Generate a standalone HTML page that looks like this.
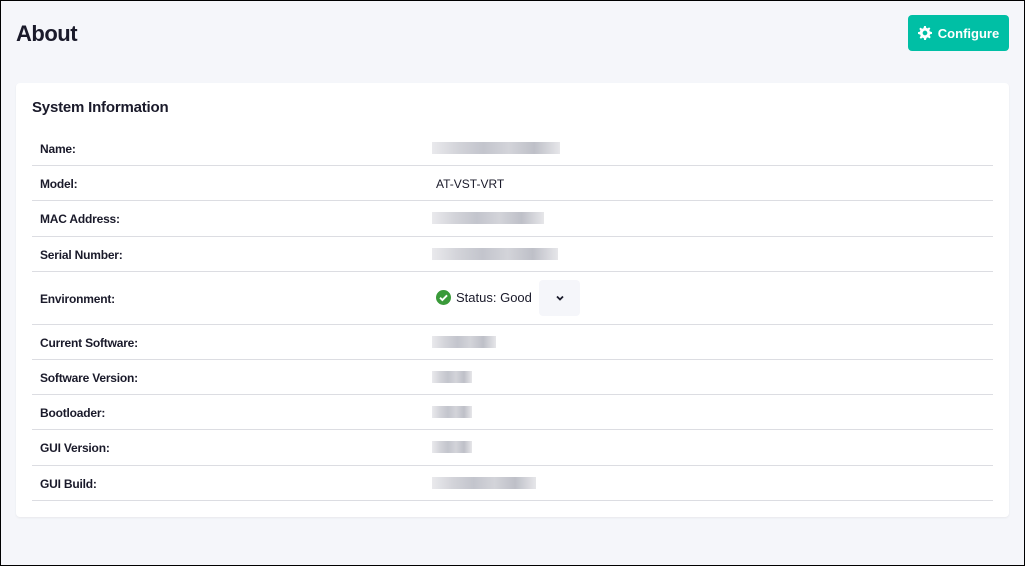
<!DOCTYPE html>
<html><head><style>
*{box-sizing:border-box;margin:0;padding:0}
body{width:1025px;height:566px;background:#f5f6fa;font-family:"Liberation Sans",sans-serif;position:relative;overflow:hidden}
.frame{position:fixed;left:0;top:0;width:1025px;height:566px;border:1px solid #000;pointer-events:none}
h1{position:absolute;left:16px;top:21px;font-size:22px;font-weight:bold;color:#1a1a2a;letter-spacing:-0.5px}
.btn{position:absolute;left:908px;top:15px;width:101px;height:36px;background:#00bfa5;border-radius:4px;color:#fff;font-size:13px;font-weight:bold;display:flex;align-items:center;justify-content:center;gap:6px}
.card{position:absolute;left:16px;top:83px;width:993px;height:434px;background:#fff;border-radius:4px;box-shadow:0 1px 2px rgba(0,0,0,.06)}
.card h2{position:absolute;left:16px;top:16px;font-size:15px;font-weight:bold;color:#1a1a2a;letter-spacing:-0.2px}
.row{position:absolute;left:16px;width:961px;border-bottom:1px solid #dcdde2;font-size:12px;color:#1a1a2a}
.row .l{position:absolute;left:8px;font-weight:bold;letter-spacing:-0.2px}
.row .v{position:absolute;left:400px}
.blur{height:12px;background:linear-gradient(90deg,#e4e4e8,#c8c9d0 20%,#b4b6c0 40%,#c8c9d0 60%,#aeb0ba 80%,#e0e0e4);opacity:.8}
</style></head><body>
<h1>About</h1>
<div class="btn"><svg width="14" height="14" viewBox="0 0 16 16"><path fill="#fff" d="M7 0h2l.4 2.1 1.5.6 1.8-1.2 1.4 1.4-1.2 1.8.6 1.5L16 7v2l-2.1.4-.6 1.5 1.2 1.8-1.4 1.4-1.8-1.2-1.5.6L9 16H7l-.4-2.1-1.5-.6-1.8 1.2-1.4-1.4 1.2-1.8-.6-1.5L0 9V7l2.1-.4.6-1.5-1.2-1.8 1.4-1.4 1.8 1.2 1.5-.6zM8 5.3A2.7 2.7 0 1 0 8 10.7 2.7 2.7 0 1 0 8 5.3z"/></svg>Configure</div>
<div class="card">
<h2>System Information</h2>
<div class="row" style="top:48px;height:35px"><span class="l" style="top:11px">Name:</span><div class="v blur" style="top:11px;width:128px"></div></div>
<div class="row" style="top:83px;height:35px"><span class="l" style="top:11px">Model:</span><span class="v" style="top:11px;left:404px">AT-VST-VRT</span></div>
<div class="row" style="top:118px;height:36px"><span class="l" style="top:11px">MAC Address:</span><div class="v blur" style="top:11px;width:112px"></div></div>
<div class="row" style="top:154px;height:35px"><span class="l" style="top:11px">Serial Number:</span><div class="v blur" style="top:11px;width:126px"></div></div>
<div class="row" style="top:189px;height:53px"><span class="l" style="top:20px">Environment:</span>
<span class="v" style="top:18px;left:404px;display:flex;align-items:center;gap:5px"><svg width="15" height="15" viewBox="0 0 16 16"><circle cx="8" cy="8" r="8" fill="#3a9a3a"/><path d="M4.3 8.2l2.5 2.5 5-5" stroke="#fff" stroke-width="2" fill="none"/></svg><span style="font-size:13px">Status: Good</span></span>
<div style="position:absolute;left:507px;top:8px;width:41px;height:36px;background:#f5f6fa;border-radius:4px;display:flex;align-items:center;justify-content:center"><svg width="10" height="8" viewBox="0 0 10 8"><path d="M2 2.5l3 3 3-3" stroke="#1a1a2a" stroke-width="1.8" fill="none"/></svg></div></div>
<div class="row" style="top:242px;height:35px"><span class="l" style="top:11px">Current Software:</span><div class="v blur" style="top:11px;width:64px"></div></div>
<div class="row" style="top:277px;height:35px"><span class="l" style="top:11px">Software Version:</span><div class="v blur" style="top:11px;width:40px"></div></div>
<div class="row" style="top:312px;height:35px"><span class="l" style="top:11px">Bootloader:</span><div class="v blur" style="top:11px;width:40px"></div></div>
<div class="row" style="top:347px;height:36px"><span class="l" style="top:11px">GUI Version:</span><div class="v blur" style="top:11px;width:40px"></div></div>
<div class="row" style="top:383px;height:35px"><span class="l" style="top:11px">GUI Build:</span><div class="v blur" style="top:11px;width:104px"></div></div>
</div>
<div class="frame"></div>
</body></html>
